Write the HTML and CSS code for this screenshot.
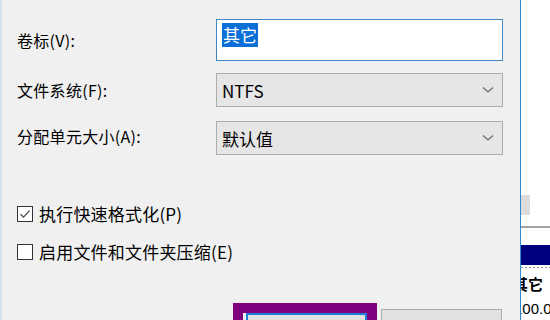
FILE: index.html
```html
<!DOCTYPE html>
<html lang="zh-CN">
<head>
<meta charset="utf-8">
<link rel="stylesheet" href="styles.css">
</head>
<body>
<div class="dialog">
  <div class="form">
    <label class="lbl">卷标(V):</label>
    <div class="input"><span class="sel">其它</span></div>
    <label class="lbl">文件系统(F):</label>
    <div class="select"><span>NTFS</span><svg class="chev" width="12" height="8" viewBox="0 0 12 8"><path d="M1 1.5 L6 6 L11 1.5" fill="none" stroke="#6d6d6d" stroke-width="1.3"/></svg></div>
    <label class="lbl">分配单元大小(A):</label>
    <div class="select"><span>默认值</span><svg class="chev" width="12" height="8" viewBox="0 0 12 8"><path d="M1 1.5 L6 6 L11 1.5" fill="none" stroke="#6d6d6d" stroke-width="1.3"/></svg></div>
  </div>
  <div class="sep"></div>
  <div class="checks">
    <div class="check"><span class="box"><svg width="14" height="14" viewBox="0 0 14 14"><path d="M2.5 7.2 L5.6 10.2 L11.6 3.6" fill="none" stroke="#444" stroke-width="1.2"/></svg></span><span>执行快速格式化(P)</span></div>
    <div class="check"><span class="box"></span><span>启用文件和文件夹压缩(E)</span></div>
  </div>
  <div class="buttons">
    <div class="mark"><div class="btn primary"></div></div>
    <div class="btn"></div>
  </div>
</div>
<div class="side">
  <div class="gblock"></div>
  <div class="gline"></div>
  <div class="navy"></div>
  <div class="dots"></div>
  <div class="stxt">其它</div>
  <div class="stxt2">100.0</div>
</div>
</body>
</html>
```
FILE: styles.css
```css
html, body {
  margin: 0;
  padding: 0;
}
body {
  width: 550px;
  height: 320px;
  overflow: hidden;
  display: flex;
  background: #ffffff;
  font-family: "Noto Sans CJK SC", "Noto Sans", sans-serif;
  color: #000;
}
.dialog {
  box-sizing: border-box;
  width: 521px;
  height: 320px;
  flex: none;
  overflow: hidden;
  background: #f0f0f0;
  border-left: 2px solid #d4e3ef;
  border-right: 1px solid #2f88d2;
  padding: 19px 0 0 15px;
  display: flex;
  flex-direction: column;
}
.form {
  display: grid;
  grid-template-columns: 199px 287px;
  grid-template-rows: 42px 34px 34px;
  row-gap: 12px;
  align-items: center;
}
.lbl {
  font-size: 16px;
  line-height: 20px;
  letter-spacing: 0.3px;
}
.input {
  box-sizing: border-box;
  height: 42px;
  background: #fff;
  border: 1px solid #3d87c4;
  padding: 3px 0 0 5px;
  align-self: stretch;
}
.sel {
  display: inline-block;
  background: #0a6fd6;
  color: #fff;
  font-size: 17px;
  line-height: 24px;
  padding: 0 1px;
}
.select {
  box-sizing: border-box;
  height: 34px;
  background: #e6e6e6;
  border: 1px solid #adadad;
  display: flex;
  align-items: center;
  justify-content: space-between;
  padding: 0 8px 0 5px;
  font-size: 17px;
}
.form > .select:last-child { margin-top: 4px; }
.sep {
  height: 1px;
  margin: 5px 0 0 206px;
  width: 274px;
  background: #e9e9e9;
}
.checks {
  margin-top: 46px;
  display: flex;
  flex-direction: column;
  gap: 18px;
}
.check {
  display: flex;
  align-items: center;
  gap: 6px;
  font-size: 17px;
  line-height: 20px;
  letter-spacing: 0.2px;
}
.box {
  box-sizing: border-box;
  width: 16px;
  height: 16px;
  border: 1px solid #333;
  background: #fff;
  display: flex;
  align-items: center;
  justify-content: center;
}
.buttons {
  margin-top: 41px;
  margin-left: 216px;
  display: flex;
  align-items: flex-start;
  gap: 4px;
}
.mark {
  box-sizing: border-box;
  width: 144px;
  height: 18px;
  flex: none;
  border: 10px solid #800080;
  border-bottom: none;
  padding: 0 0 0 3px;
  background: #f0f0f0;
}
.btn {
  box-sizing: border-box;
  width: 121px;
  height: 12px;
  flex: none;
  margin-top: 6px;
  background: #e1e1e1;
  border: 1px solid #adadad;
  border-bottom: none;
}
.btn.primary {
  width: 121px;
  height: 8px;
  margin-top: 0;
  border: 2px solid #1a7fd6;
  border-bottom: none;
}
.side {
  width: 29px;
  height: 320px;
  overflow: hidden;
  background: #fff;
  display: flex;
  flex-direction: column;
}
.gblock {
  margin-top: 195px;
  width: 9px;
  height: 20px;
  background: #dcdcdc;
}
.gline {
  margin-top: 11px;
  height: 2px;
  background: #a3a3a3;
}
.navy {
  margin-top: 17px;
  height: 20px;
  background: #00007f;
}
.dots {
  margin-top: 2px;
  height: 1px;
  background: repeating-linear-gradient(90deg, #9a9a9a 0 2px, transparent 2px 4px);
}
.stxt {
  margin-top: 7px;
  margin-left: -8px;
  font-size: 15px;
  line-height: 18px;
  font-weight: bold;
  white-space: nowrap;
}
.stxt2 {
  margin-top: 7px;
  margin-left: -7px;
  font-family: "Liberation Sans", sans-serif;
  font-size: 15px;
  line-height: 18px;
  white-space: nowrap;
}
```
